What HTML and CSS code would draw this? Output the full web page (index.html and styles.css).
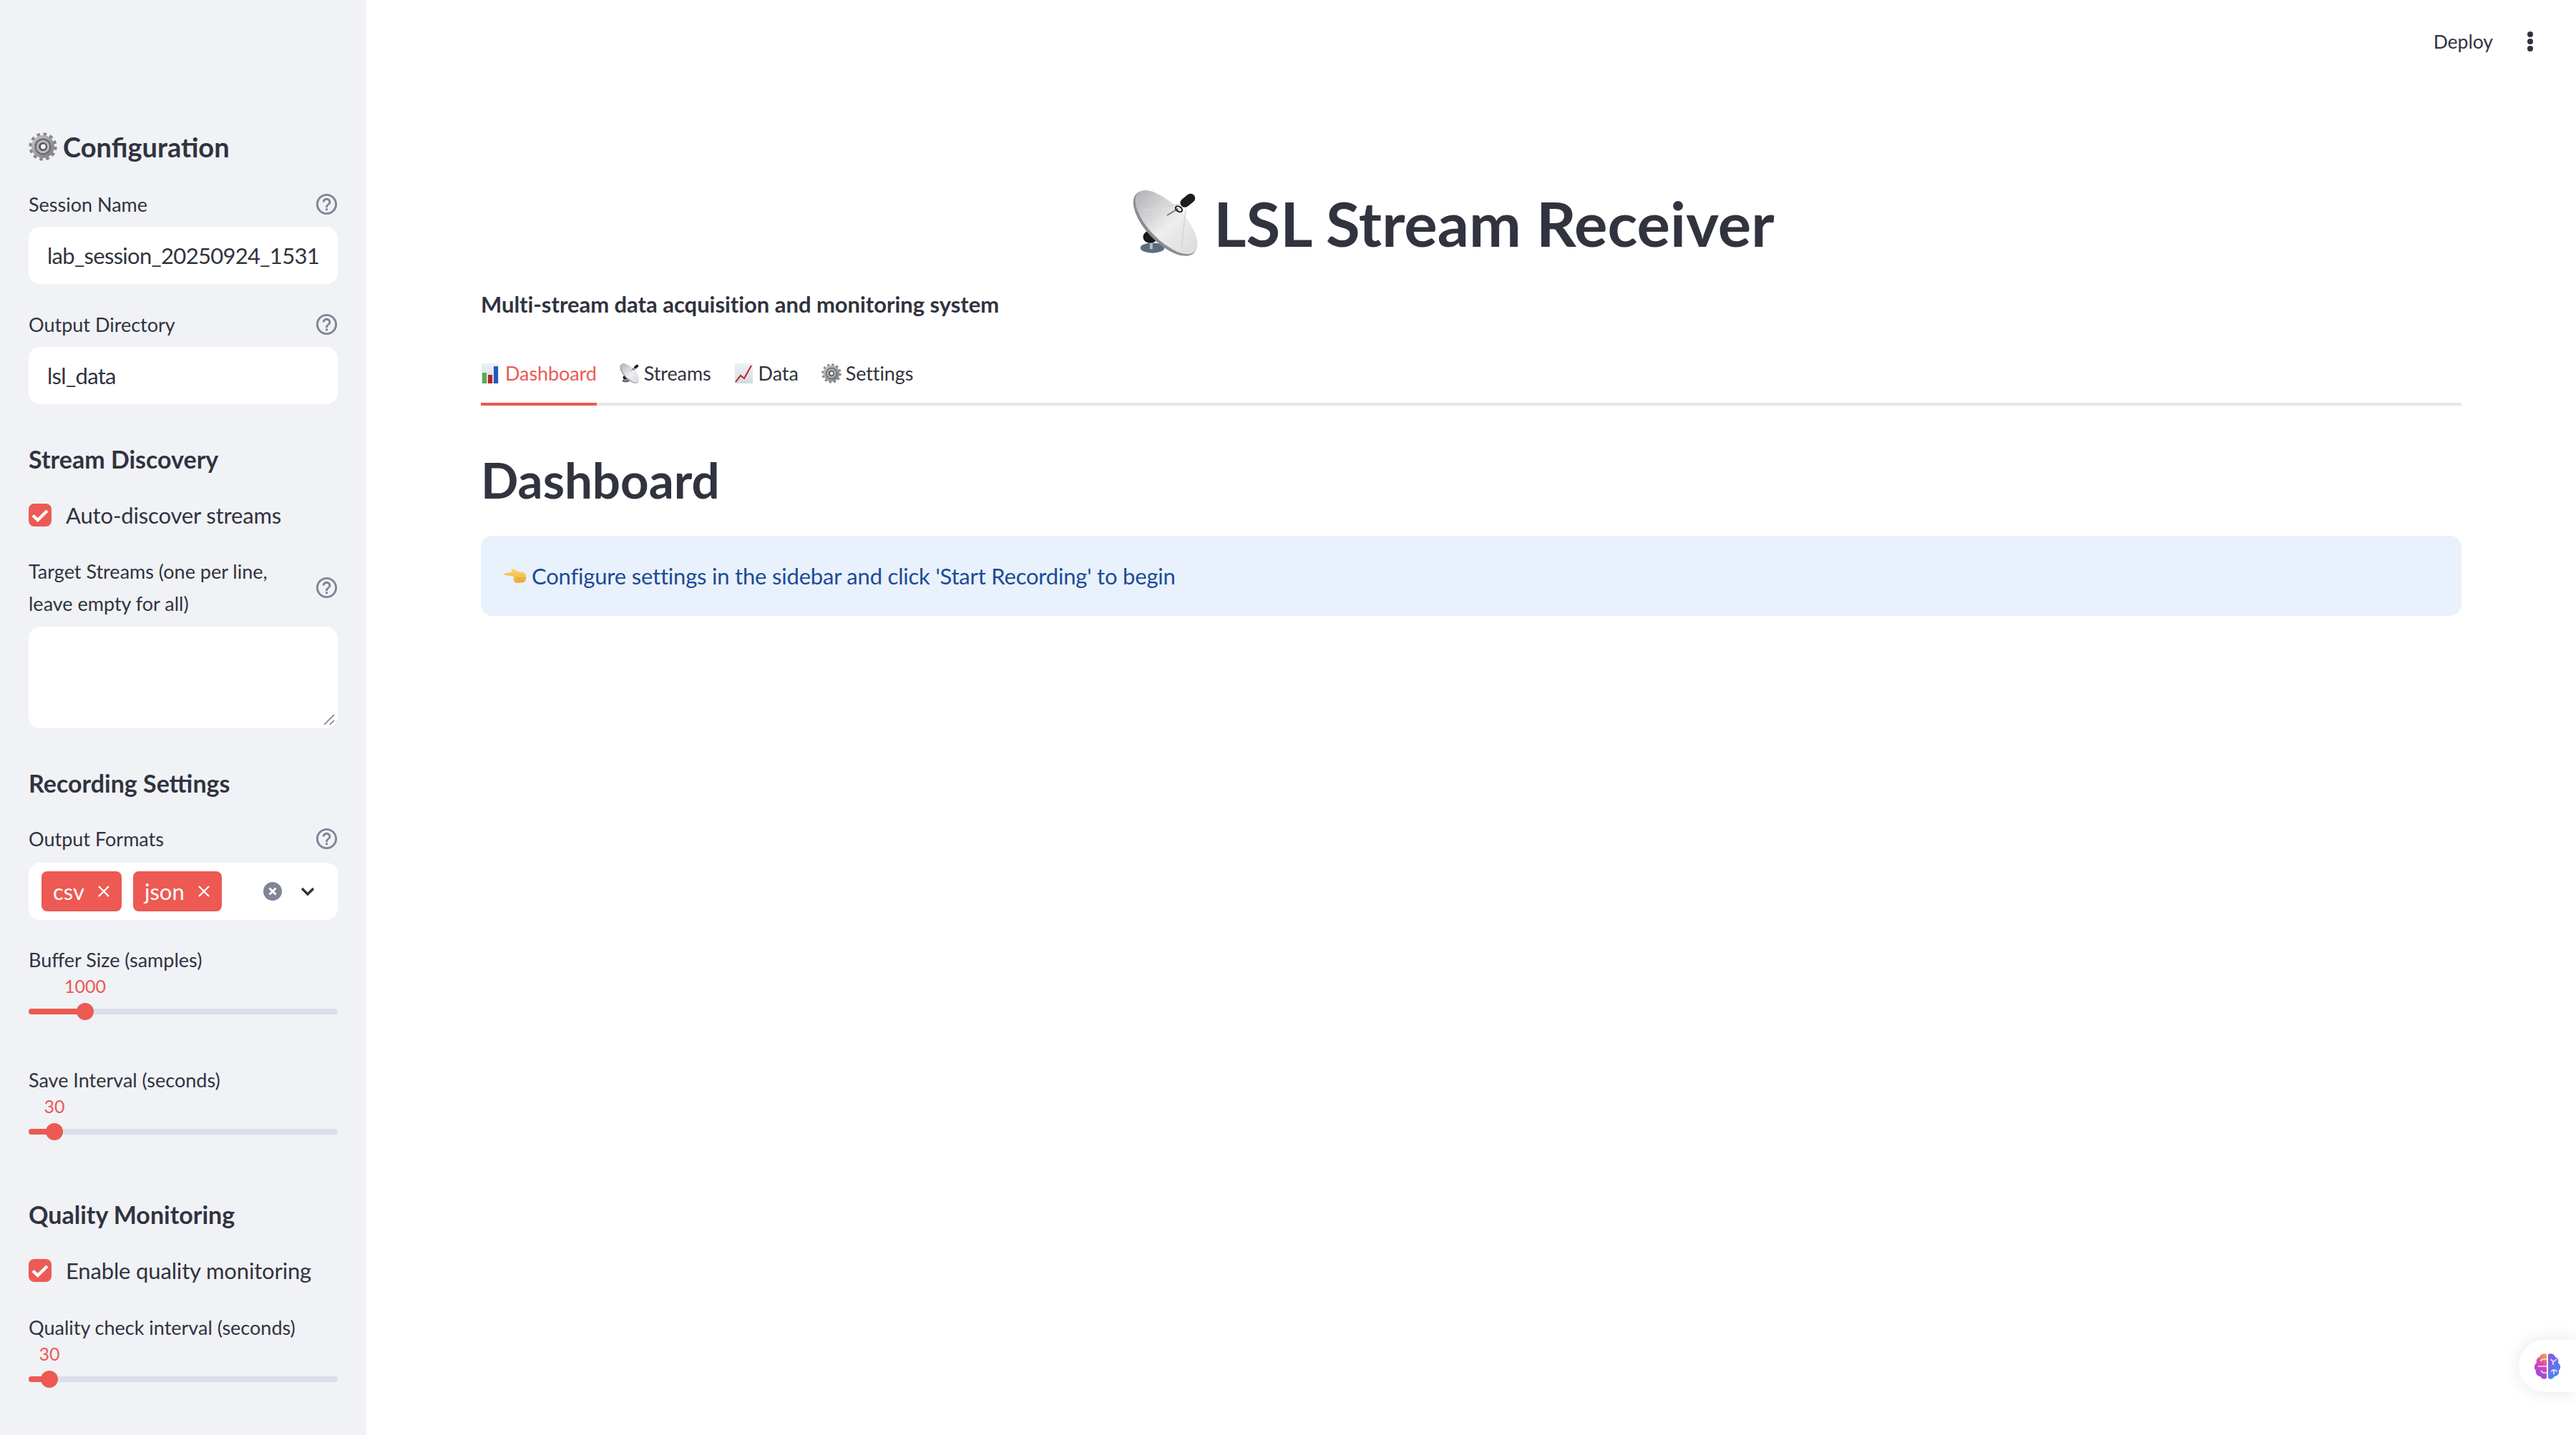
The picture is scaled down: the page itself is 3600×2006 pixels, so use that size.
FILE: index.html
```html
<!DOCTYPE html>
<html lang="en">
<head>
  <meta charset="UTF-8">
  <title>LSL Stream Receiver</title>
  <link rel="stylesheet" href="styles.css">
</head>
<body>
  <!--SHARED ICONS-->
  <svg class="icon-defs" width="0" height="0">
    <defs>
      <linearGradient id="gear-body" x1="0" y1="0" x2="1" y2="1">
        <stop offset="0" stop-color="#c9c9cc"/>
        <stop offset="1" stop-color="#77787c"/>
      </linearGradient>
      <linearGradient id="dish-face" x1="0" y1="0" x2="1" y2="0">
        <stop offset="0" stop-color="#b4b5b8"/>
        <stop offset="0.55" stop-color="#eeeeef"/>
        <stop offset="1" stop-color="#dcdcde"/>
      </linearGradient>
      <linearGradient id="paper" x1="0" y1="0" x2="0" y2="1">
        <stop offset="0" stop-color="#eef1f4"/>
        <stop offset="1" stop-color="#d3dbe2"/>
      </linearGradient>
      <linearGradient id="hand" x1="0" y1="0" x2="0" y2="1">
        <stop offset="0" stop-color="#fbd667"/>
        <stop offset="1" stop-color="#eeae3c"/>
      </linearGradient>
      <linearGradient id="brain-left" x1="0.7" y1="0" x2="0.4" y2="1">
        <stop offset="0" stop-color="#f5a03c"/>
        <stop offset="0.4" stop-color="#dd45b0"/>
        <stop offset="1" stop-color="#8e4be6"/>
      </linearGradient>
      <linearGradient id="brain-right" x1="0" y1="0" x2="0.6" y2="1">
        <stop offset="0" stop-color="#9a4fe0"/>
        <stop offset="1" stop-color="#3f8df5"/>
      </linearGradient>
    </defs>
    <symbol id="i-help" viewBox="0 0 24 24">
      <path fill="#808495" d="M11 18h2v-2h-2v2zm1-16C6.48 2 2 6.48 2 12s4.48 10 10 10 10-4.48 10-10S17.52 2 12 2zm0 18c-4.41 0-8-3.59-8-8s3.59-8 8-8 8 3.59 8 8-3.59 8-8 8zm0-14c-2.21 0-4 1.79-4 4h2c0-1.1.9-2 2-2s2 .9 2 2c0 2-3 1.75-3 5h2c0-2.25 3-2.5 3-5 0-2.21-1.79-4-4-4z"/>
    </symbol>
    <symbol id="i-check" viewBox="0 0 32 32">
      <path fill="none" stroke="#fff" stroke-width="4.4" d="M6 16.5l6.700 6.500L26 10"/>
    </symbol>
    <symbol id="i-gear" viewBox="0 0 100 100">
      <circle cx="50" cy="50" r="42" fill="none" stroke="#85868a" stroke-width="14" stroke-dasharray="11 11"/>
      <circle cx="50" cy="50" r="40" fill="url(#gear-body)"/>
      <circle cx="50" cy="50" r="29" fill="#6c6d72"/>
      <circle cx="50" cy="50" r="23" fill="#b7b8bb"/>
      <circle cx="50" cy="50" r="15" fill="#55565a"/>
      <circle cx="51" cy="50" r="8.5" fill="#f1f1f2"/>
    </symbol>
    <symbol id="i-dish" viewBox="130 75 280 280">
      <ellipse cx="215" cy="318" rx="50" ry="21" fill="#5c6b80"/>
      <rect x="204" y="285" width="12" height="38" fill="#b9bcc1"/>
      <ellipse cx="206" cy="272" rx="30" ry="26" fill="#17181b"/>
      <ellipse cx="268" cy="216" rx="172" ry="80" transform="rotate(46 268 216)" fill="#8b8c90"/>
      <ellipse cx="273" cy="211" rx="170" ry="74" transform="rotate(46 273 211)" fill="url(#dish-face)"/>
      <path d="M176 162L332 135M336 316L353 160M276 182L322 154" stroke="#d6d6d8" stroke-width="5" fill="none"/>
      <path d="M276 182L322 154" stroke="#77787c" stroke-width="5"/>
      <ellipse cx="325" cy="156" rx="15" ry="10" transform="rotate(35 325 156)" fill="none" stroke="#17181b" stroke-width="6"/>
      <path d="M350 130L374 111" stroke="#1b1c20" stroke-width="38" stroke-linecap="round"/>
    </symbol>
    <symbol id="i-bars" viewBox="0 0 28 28">
      <rect x="1" y="0" width="24" height="28" fill="url(#paper)"/>
      <rect x="2" y="13" width="6" height="15" fill="#4fb04f"/>
      <rect x="10" y="16" width="6" height="12" fill="#b9261d"/>
      <rect x="18" y="4" width="6" height="24" fill="#2458bd"/>
    </symbol>
    <symbol id="i-trend" viewBox="0 0 28 28">
      <rect x="1" y="0" width="25" height="28" fill="url(#paper)"/>
      <path d="M2 26L9 17L14 21L24 3" fill="none" stroke="#b9261d" stroke-width="2"/>
    </symbol>
    <symbol id="i-hand" viewBox="0 0 32 22">
      <path fill="url(#hand)" d="M1 7.500L12 5.500L11 2.500C11.500 1 13.500 1 15 2L21 5.500C24 5 30 6 31 9.500C32 14 31 19 27 20.500L18 21C14 20.500 13.500 16 13.500 11.500L2 10C0.500 9.500 0.500 8 1 7.500Z"/>
      <path fill="none" stroke="#d9952c" stroke-width="0.8" d="M18 14.500L31 14M18 18L30 17.500"/>
    </symbol>
    <symbol id="i-brain" viewBox="0 0 38 38">
      <path fill="url(#brain-left)" d="M18 2C14 0 9 2 8 6C4 7 3 11 4 14C0 17 0 22 3 25C2 30 6 33 9 33C11 37 16 38 18 35Z"/>
      <path fill="url(#brain-right)" d="M20 2C24 0 29 2 30 6C34 7 35 11 34 14C38 17 38 22 35 25C36 30 32 33 29 33C27 37 22 38 20 35Z"/>
      <path fill="none" stroke="#f4e6fb" stroke-width="1.600" d="M6 19H18M18 9H13C11 9 10 10 10 12M18 28H13L10 25M24 9L27 13M32 9L27 13V17M24 26L28 24L33 26M28 24V30"/>
    </symbol>
  </svg>

  <div class="app">
    <!--SIDEBAR-->
    <aside class="sidebar">
      <h2 class="side-title"><svg class="title-gear"><use href="#i-gear"/></svg>Configuration</h2>

      <div class="field first">
        <div class="label"><span>Session Name</span><svg class="help"><use href="#i-help"/></svg></div>
        <input class="text-input" type="text" value="lab_session_20250924_1531">
      </div>

      <div class="field">
        <div class="label"><span>Output Directory</span><svg class="help"><use href="#i-help"/></svg></div>
        <input class="text-input" type="text" value="lsl_data">
      </div>

      <h3 class="section">Stream Discovery</h3>
      <div class="check"><div class="box"><svg><use href="#i-check"/></svg></div><span>Auto-discover streams</span></div>

      <div class="field target">
        <div class="label tall"><span>Target Streams (one per line, leave empty for all)</span><svg class="help"><use href="#i-help"/></svg></div>
        <div class="area">
          <textarea class="text-area"></textarea>
          <svg class="grip" viewBox="0 0 16 16"><path d="M1 15L15 1M9 15L15 9"/></svg>
        </div>
      </div>

      <h3 class="section">Recording Settings</h3>

      <div class="field formats">
        <div class="label"><span>Output Formats</span><svg class="help"><use href="#i-help"/></svg></div>
        <div class="multi">
          <span class="tag">csv<svg viewBox="0 0 16 16"><path d="M1 1L15 15M15 1L1 15"/></svg></span>
          <span class="tag">json<svg viewBox="0 0 16 16"><path d="M1 1L15 15M15 1L1 15"/></svg></span>
          <svg class="clear" viewBox="0 0 26 26"><circle cx="13" cy="13" r="13" fill="#808495"/><path d="M8.500 8.500L17.500 17.500M17.500 8.500L8.500 17.500" stroke="#fff" stroke-width="3"/></svg>
          <svg class="chevron" viewBox="0 0 20 12"><path d="M2 2L10 10L18 2" fill="none" stroke="#31333f" stroke-width="3.500"/></svg>
        </div>
      </div>

      <div class="slider-field first-slider">
        <div class="label"><span>Buffer Size (samples)</span></div>
        <div class="slider">
          <span class="slider-value" style="left: 79px">1000</span>
          <div class="track"><div class="fill" style="width: 79px"></div><div class="thumb" style="left: 79px"></div></div>
        </div>
      </div>

      <div class="slider-field">
        <div class="label"><span>Save Interval (seconds)</span></div>
        <div class="slider">
          <span class="slider-value" style="left: 36px">30</span>
          <div class="track"><div class="fill" style="width: 36px"></div><div class="thumb" style="left: 36px"></div></div>
        </div>
      </div>

      <h3 class="section quality">Quality Monitoring</h3>
      <div class="check"><div class="box"><svg><use href="#i-check"/></svg></div><span>Enable quality monitoring</span></div>

      <div class="slider-field last-slider">
        <div class="label"><span>Quality check interval (seconds)</span></div>
        <div class="slider">
          <span class="slider-value" style="left: 29px">30</span>
          <div class="track"><div class="fill" style="width: 29px"></div><div class="thumb" style="left: 29px"></div></div>
        </div>
      </div>
    </aside>

    <!--EVERYTHING ELSE-->
    <main class="main">
      <div class="topbar">
        <span class="deploy">Deploy</span>
        <div class="dots"><i></i><i></i><i></i></div>
      </div>

      <div class="content">
        <h1 class="page-title"><svg class="title-dish"><use href="#i-dish"/></svg>LSL Stream Receiver</h1>
        <p class="subtitle">Multi-stream data acquisition and monitoring system</p>

        <div class="tabs">
          <div class="tab active"><svg><use href="#i-bars"/></svg>Dashboard</div>
          <div class="tab"><svg><use href="#i-dish"/></svg>Streams</div>
          <div class="tab"><svg><use href="#i-trend"/></svg>Data</div>
          <div class="tab"><svg><use href="#i-gear"/></svg>Settings</div>
        </div>

        <h2 class="panel-title">Dashboard</h2>
        <div class="alert"><svg><use href="#i-hand"/></svg>Configure settings in the sidebar and click 'Start Recording' to begin</div>
      </div>
    </main>
  </div>

  <div class="assistant"><svg><use href="#i-brain"/></svg></div>
</body>
</html>
```

FILE: styles.css
```css
* {
  margin: 0;
  padding: 0;
  box-sizing: border-box;
}

html, body {
  height: 100%;
  overflow: hidden;
}

body {
  font-family: "Lato", "Noto Sans", sans-serif;
  color: #31333f;
  background-color: #fff;
  position: relative;
}

.icon-defs {
  position: absolute;
}

.app {
  display: flex;
  height: 100vh;
}

/* sidebar */
.sidebar {
  width: 512px;
  flex-shrink: 0;
  background-color: #f0f2f6;
  padding: 180px 40px 0;
  overflow: hidden;
}

.side-title {
  display: flex;
  align-items: center;
  font-size: 38px;
  font-weight: 700;
  line-height: 50px;
}

.title-gear {
  width: 40px;
  height: 40px;
  margin-right: 8px;
}

.field {
  margin-top: 36px;
}

.field.first {
  margin-top: 35px;
}

.field.target {
  margin-top: 40px;
}

.field.formats {
  margin-top: 35px;
}

.field.formats .label {
  margin-bottom: 14px;
}

.label {
  display: flex;
  justify-content: space-between;
  align-items: center;
  height: 40px;
  font-size: 27px;
  line-height: 45px;
  margin-bottom: 12px;
}

.label.tall {
  height: 90px;
  margin-bottom: 10px;
}

.label.tall span {
  width: 380px;
}

.help {
  width: 35px;
  height: 35px;
  margin-right: -2px;
  flex-shrink: 0;
}

.text-input {
  display: block;
  width: 100%;
  height: 80px;
  border: none;
  outline: none;
  border-radius: 16px;
  background-color: #fff;
  padding: 0 0 0 26px;
  font-family: inherit;
  font-size: 31px;
  letter-spacing: -0.7px;
  color: #31333f;
}

.area {
  position: relative;
}

.text-area {
  display: block;
  width: 100%;
  height: 142px;
  border: none;
  outline: none;
  border-radius: 16px;
  background-color: #fff;
  resize: none;
}

.grip {
  position: absolute;
  right: 4px;
  bottom: 4px;
  width: 16px;
  height: 16px;
}

.grip path {
  fill: none;
  stroke: #777;
  stroke-width: 1.500;
}

.section {
  font-size: 34px;
  font-weight: 700;
  line-height: 44px;
  margin-top: 55px;
}

.section.quality {
  margin-top: 90px;
}

.check {
  display: flex;
  align-items: center;
  height: 32px;
  margin-top: 40px;
  font-size: 31px;
  letter-spacing: -0.15px;
}

.box {
  width: 32px;
  height: 32px;
  border-radius: 8px;
  background-color: #ec5a53;
  margin-right: 20px;
}

.box svg {
  display: block;
  width: 32px;
  height: 32px;
}

.multi {
  display: flex;
  align-items: center;
  height: 80px;
  border-radius: 16px;
  background-color: #fff;
  padding-left: 18px;
}

.tag {
  display: flex;
  align-items: center;
  height: 56px;
  padding: 0 17px 0 16px;
  margin-right: 16px;
  border-radius: 8px;
  background-color: #ec5a53;
  color: #fff;
  font-size: 31px;
}

.tag svg {
  width: 16px;
  height: 16px;
  margin-left: 19px;
}

.tag path {
  stroke: #fff;
  stroke-width: 2.4;
}

.clear {
  width: 26px;
  height: 26px;
  margin-left: auto;
}

.chevron {
  width: 20px;
  height: 12px;
  margin: 0 32px 0 26px;
}

.slider-field {
  margin-top: 71px;
}

.slider-field.first-slider {
  margin-top: 35px;
}

.slider-field.last-slider {
  margin-top: 43px;
}

.slider-field .label {
  margin-bottom: 0;
}

.slider {
  position: relative;
  padding-top: 49px;
}

.slider-value {
  position: absolute;
  top: 5px;
  transform: translateX(-50%);
  font-size: 25px;
  line-height: 24px;
  color: #ec5a53;
}

.track {
  position: relative;
  height: 8px;
  border-radius: 4px;
  background-color: #dcdfe9;
}

.fill {
  height: 8px;
  border-radius: 4px;
  background-color: #ec5a53;
}

.thumb {
  position: absolute;
  top: -8px;
  width: 24px;
  height: 24px;
  margin-left: -12px;
  border-radius: 50%;
  background-color: #ec5a53;
}

/* main area */
.main {
  flex: 1;
  min-width: 0;
}

.topbar {
  display: flex;
  justify-content: flex-end;
  align-items: center;
  height: 116px;
  padding: 0 60px 0 0;
}

.deploy {
  font-size: 26.5px;
  margin-right: 48px;
}

.dots i {
  display: block;
  width: 8px;
  height: 8px;
  border-radius: 50%;
  background-color: #31333f;
  margin: 2px 0;
}

.content {
  padding: 146px 160px 0;
}

.page-title {
  display: flex;
  justify-content: center;
  align-items: center;
  font-size: 87px;
  font-weight: 700;
  line-height: 100px;
  padding-right: 50px;
}

.title-dish {
  width: 94px;
  height: 94px;
  margin-right: 20px;
}

.subtitle {
  font-size: 31px;
  font-weight: 700;
  line-height: 50px;
  letter-spacing: -0.05px;
  margin-top: 38px;
}

.tabs {
  display: flex;
  gap: 32px;
  height: 77px;
  margin-top: 40px;
  border-bottom: 4px solid #e6e6e6;
}

.tab {
  display: flex;
  align-items: center;
  height: 77px;
  padding-bottom: 10px;
  border-bottom: 4px solid transparent;
  font-size: 27px;
  letter-spacing: -0.1px;
}

.tab svg {
  width: 28px;
  height: 28px;
  margin-right: 6px;
}

.tab.active {
  color: #ec5a53;
  border-bottom-color: #ec5a53;
}

.panel-title {
  font-size: 69px;
  font-weight: 700;
  line-height: 90px;
  margin-top: 59px;
}

.alert {
  display: flex;
  align-items: center;
  height: 112px;
  margin-top: 33px;
  padding-left: 32px;
  border-radius: 16px;
  background-color: #e9f1fc;
  color: #1c4b96;
  font-size: 31px;
  letter-spacing: -0.2px;
}

.alert svg {
  width: 32px;
  height: 22px;
  margin-right: 7px;
}

.assistant {
  position: absolute;
  right: 0;
  top: 1873px;
  display: flex;
  align-items: center;
  width: 80px;
  height: 73px;
  padding-left: 21px;
  border-radius: 36px 0 0 36px;
  background-color: #fff;
  box-shadow: 0 0 24px rgba(0, 0, 0, 0.1);
}

.assistant svg {
  width: 38px;
  height: 38px;
}
```
